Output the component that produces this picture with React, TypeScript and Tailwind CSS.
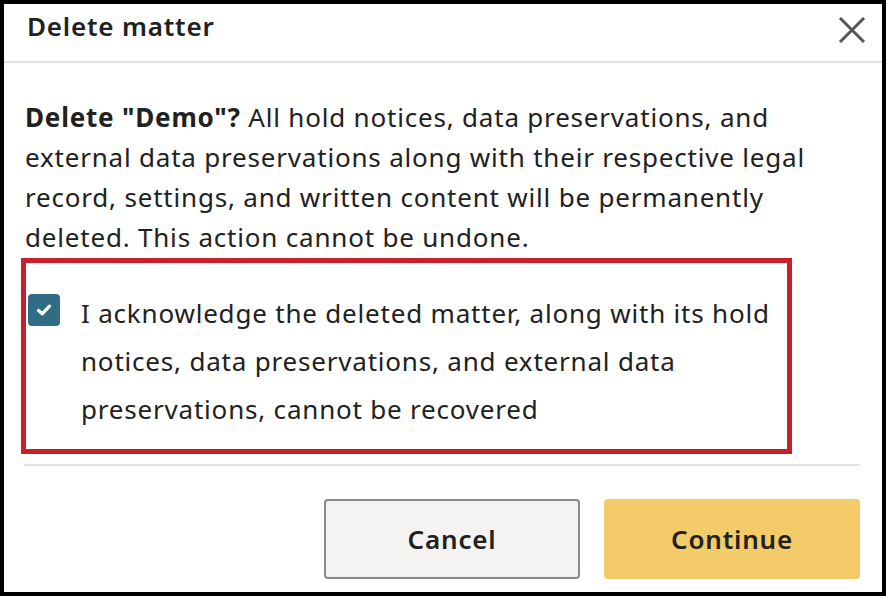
import { useState } from 'react';

export default function App() {
  const [acknowledged, setAcknowledged] = useState(true);

  return (
    <div className="h-[596px] w-[886px] bg-black pt-[4px] pr-[4px] pb-[4px] pl-[4px] font-['Noto_Sans',sans-serif] tracking-[0.8px] text-[#212121]">
      <div className="flex h-full flex-col bg-white">
        <header className="flex h-[59px] items-start justify-between border-b-2 border-[#e2e2e2] pl-[23px] pr-[16px]">
          <h2 className="mt-[9px] text-[26px] font-semibold leading-none">Delete matter</h2>
          <button type="button" aria-label="Close" className="mt-[12px] flex h-[28px] w-[28px] items-center justify-center text-[#555]">
            <svg viewBox="0 0 28 28" className="h-[28px] w-[28px]" fill="none" stroke="currentColor" strokeWidth="3">
              <path d="M2 2 L26 26 M26 2 L2 26" />
            </svg>
          </button>
        </header>

        <div className="flex flex-1 flex-col pl-[20px] pr-[22px] pt-[34px]">
          <p className="pl-[1px] text-[26px] leading-[40px]">
            <span className="font-bold">Delete "Demo"?</span> All hold notices, data preservations, and external data
            preservations along with their respective legal record, settings, and written content will be permanently
            deleted. This action cannot be undone.
          </p>

          <div className="mt-[1px] -ml-[3px] w-[771px] border-[5px] border-[#c81f2c] pb-[16px] pt-[26px]">
            <label className="flex cursor-pointer items-start gap-[21px] pl-[2px]">
              <input
                type="checkbox"
                className="sr-only"
                checked={acknowledged}
                onChange={(e) => setAcknowledged(e.target.checked)}
              />
              <span
                className={
                  acknowledged
                    ? 'mt-[5px] flex h-[32px] w-[32px] shrink-0 items-center justify-center rounded-[4px] bg-[#2f6d86]'
                    : 'mt-[5px] flex h-[32px] w-[32px] shrink-0 items-center justify-center rounded-[4px] border-2 border-[#8a8886] bg-white'
                }
              >
                {acknowledged && (
                  <svg viewBox="0 0 18 18" className="h-[18px] w-[18px]" fill="none" stroke="white" strokeWidth="3.2" strokeLinecap="round" strokeLinejoin="round">
                    <path d="M3.5 9.5 L7.2 12.8 L14.5 5.2" />
                  </svg>
                )}
              </span>
              <span className="text-[26px] leading-[48px]">
                I acknowledge the deleted matter, along with its hold notices, data preservations, and external data
                preservations, cannot be recovered
              </span>
            </label>
          </div>

          <div className="mt-[10px] h-[2px] bg-[#e2e2e2]" />

          <div className="mt-[33px] flex justify-end gap-[24px]">
            <button
              type="button"
              className="h-[80px] w-[256px] rounded-[4px] border-2 border-[#8a8886] bg-[#f4f3f2] text-[26px] font-semibold text-[#212121]"
            >
              Cancel
            </button>
            <button
              type="button"
              disabled={!acknowledged}
              className="h-[80px] w-[256px] rounded-[4px] bg-[#f3cb69] text-[26px] font-semibold text-[#212121]"
            >
              Continue
            </button>
          </div>
        </div>
      </div>
    </div>
  );
}
